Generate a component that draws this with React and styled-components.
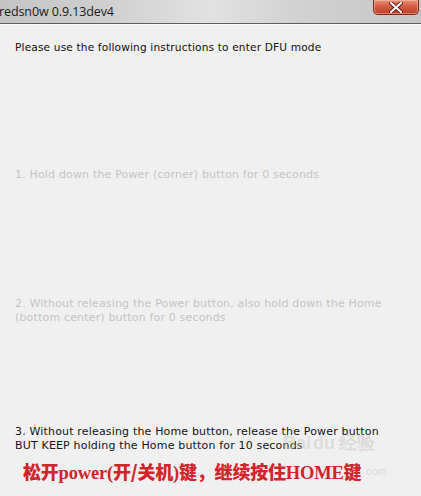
import React from "react";
import styled, { createGlobalStyle } from "styled-components";

const steps = [
  { id: 1, gap: 114, muted: true, lines: ["1. Hold down the Power (corner) button for 0 seconds"] },
  {
    id: 2,
    gap: 115,
    muted: true,
    lines: [
      "2. Without releasing the Power button, also hold down the Home",
      "(bottom center) button for 0 seconds",
    ],
  },
  {
    id: 3,
    gap: 100,
    muted: false,
    lines: [
      "3. Without releasing the Home button, release the Power button",
      "BUT KEEP holding the Home button for 10 seconds",
    ],
  },
];

export default function App() {
  return (
    <>
      <GlobalStyle />
      <Window>
        <TitleBar>
          <Title>redsn0w 0.9.13dev4</Title>
          <CloseButton>
            <svg width="14" height="11" viewBox="0 0 14 11">
              <path
                d="M2 1 L12 10 M12 1 L2 10"
                stroke="#5a1a10"
                strokeWidth="4"
                strokeLinecap="round"
              />
              <path
                d="M2 1 L12 10 M12 1 L2 10"
                stroke="#ffffff"
                strokeWidth="2.2"
                strokeLinecap="round"
              />
            </svg>
          </CloseButton>
        </TitleBar>
        <Body>
          <Intro>Please use the following instructions to enter DFU mode</Intro>
          {steps.map((s) => (
            <Step key={s.id} $gap={s.gap} $muted={s.muted}>
              {s.lines.map((l) => (
                <div key={l}>{l}</div>
              ))}
            </Step>
          ))}
          <Note>
            松开<Latin>power(</Latin>开/关机<Latin>)</Latin>键，继续按住<Latin>HOME</Latin>键
          </Note>
          <Watermark>
            Bai<Paw>du</Paw>经验
          </Watermark>
          <WatermarkDomain>com</WatermarkDomain>
        </Body>
      </Window>
    </>
  );
}

const GlobalStyle = createGlobalStyle`
  html, body {
    margin: 0;
    padding: 0;
    background: #f0f0f0;
  }
`;

const Window = styled.div`
  width: 421px;
  height: 496px;
  display: flex;
  flex-direction: column;
  background: #f0f0f0;
  overflow: hidden;
`;

const TitleBar = styled.div`
  height: 23px;
  flex-shrink: 0;
  display: flex;
  align-items: flex-start;
  justify-content: space-between;
  background: linear-gradient(
    90deg,
    #c4c4c4 0%,
    #cfcfcf 25%,
    #e2e2e2 50%,
    #d2d2d2 70%,
    #c6c6c6 100%
  );
  border-bottom: 1px solid #5e5e5e;
  box-shadow: 0 1px 0 #fafafa;
`;

const Title = styled.div`
  font-family: "Open Sans", "Liberation Sans", sans-serif;
  font-size: 12.5px;
  line-height: 23px;
  color: #1c1c1c;
  margin-left: -1px;
  letter-spacing: -0.1px;
`;

const CloseButton = styled.div`
  width: 44px;
  height: 14px;
  margin-right: 2px;
  display: flex;
  align-items: center;
  justify-content: center;
  border: 1px solid #7a2a1c;
  border-top: none;
  border-radius: 0 0 5px 5px;
  background: linear-gradient(180deg, #e8917a 0%, #d4583e 50%, #c0402a 100%);
  box-shadow: inset 0 0 0 1px rgba(255, 200, 180, 0.5);
`;

const Body = styled.div`
  position: relative;
  flex: 1;
  display: flex;
  flex-direction: column;
  padding: 16px 0 0 15px;
  font-family: "DejaVu Sans", Verdana, sans-serif;
  font-size: 11px;
  line-height: 14px;
`;

const Intro = styled.div`
  color: #101010;
  font-size: 10.6px;
  letter-spacing: 0.15px;
`;

const Step = styled.div`
  margin-top: ${(p) => p.$gap}px;
  color: ${(p) => (p.$muted ? "#c4c4c4" : "#141414")};
  letter-spacing: 0.17px;
`;

const Note = styled.div`
  margin-top: 8px;
  margin-left: 8px;
  font-family: "Noto Sans CJK SC", sans-serif;
  font-weight: 900;
  font-size: 18px;
  line-height: 21px;
  color: #d3232b;
  letter-spacing: -0.2px;
`;

const Latin = styled.span`
  font-family: "Liberation Serif", "Times New Roman", serif;
  font-weight: 700;
  font-size: 18.5px;
`;

const Watermark = styled.div`
  position: absolute;
  left: 283px;
  top: 412px;
  font-family: "Liberation Sans", Arial, sans-serif;
  font-weight: 700;
  font-size: 18px;
  color: rgba(196, 196, 196, 0.45);
  white-space: nowrap;
  pointer-events: none;
`;

const Paw = styled.span`
  margin: 0 4px 0 2px;
`;

const WatermarkDomain = styled.div`
  position: absolute;
  left: 366px;
  top: 440px;
  font-family: "Liberation Sans", Arial, sans-serif;
  font-size: 11px;
  color: rgba(196, 196, 196, 0.55);
  pointer-events: none;
`;
